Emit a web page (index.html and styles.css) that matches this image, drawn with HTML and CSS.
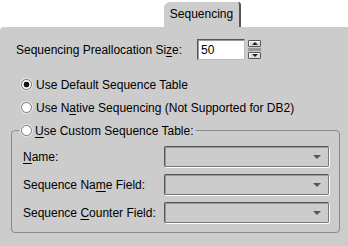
FILE: index.html
```html
<!DOCTYPE html>
<html lang="en">
<head>
    <meta charset="UTF-8">
    <title>Sequencing</title>
    <link rel="stylesheet" href="styles.css">
</head>
<body>
    <div class="tabs">
        <div class="tab">Sequencing</div>
    </div>
    <div class="panel">
        <div class="prealloc">
            <span class="prealloc-label">Sequencing Preallocation Si<u>z</u>e:</span>
            <span class="spin-field">50</span>
            <span class="spin-buttons">
                <span class="spin-btn"><span class="arrow-up"></span></span>
                <span class="spin-bar"></span>
                <span class="spin-btn"><span class="arrow-down"></span></span>
            </span>
        </div>
        <div class="radio-row">
            <span class="radio checked"></span>
            <span>Use Default Sequence Table</span>
        </div>
        <div class="radio-row">
            <span class="radio"></span>
            <span>Use N<u>a</u>tive Sequencing (Not Supported for DB2)</span>
        </div>
        <fieldset class="group">
            <legend class="radio-row legend">
                <span class="radio"></span>
                <span><u>U</u>se Custom Sequence Table:</span>
            </legend>
            <div class="field-grid">
                <span class="field-label"><u>N</u>ame:</span>
                <span class="combo"><span class="arrow-down combo-arrow"></span></span>
                <span class="field-label">Sequence Na<u>m</u>e Field:</span>
                <span class="combo"><span class="arrow-down combo-arrow"></span></span>
                <span class="field-label">Sequence <u>C</u>ounter Field:</span>
                <span class="combo"><span class="arrow-down combo-arrow"></span></span>
            </div>
        </fieldset>
    </div>
</body>
</html>
```
FILE: styles.css
```css
body {
    margin: 0;
    background-color: #fff;
    font-family: "Liberation Sans", Arial, sans-serif;
    font-size: 12px;
    color: #000;
    width: 348px;
    height: 246px;
    overflow: hidden;
}

u {
    text-decoration-thickness: 1px;
    text-underline-offset: 2px;
}

.tabs {
    display: flex;
    height: 27px;
    padding-left: 164px;
    align-items: flex-end;
}

.tab {
    width: 77px;
    height: 24px;
    background-color: #cccccc;
    border-right: 2px solid #555;
    border-top-left-radius: 6px;
    border-top-right-radius: 3px;
    display: flex;
    align-items: center;
    justify-content: center;
    padding-bottom: 1px;
    box-sizing: border-box;
    height: 25px;
}

.panel {
    background-color: #cccccc;
    border-top-left-radius: 4px;
    height: 219px;
    padding: 12px 8px 0 11px;
    box-sizing: border-box;
}

.prealloc {
    display: flex;
    align-items: center;
    height: 21px;
    padding-left: 5px;
}

.prealloc-label {
    width: 181px;
}

.spin-field {
    width: 48px;
    height: 21px;
    box-sizing: border-box;
    background-color: #fff;
    border: 1px solid #555;
    border-right-color: #bbb;
    border-bottom-color: #bbb;
    box-shadow: inset 1px 1px 0 #999;
    padding: 3px 0 0 3px;
}

.spin-buttons {
    display: flex;
    flex-direction: column;
    margin-left: 3px;
    gap: 1px;
}

.spin-btn {
    width: 13px;
    height: 7px;
    box-sizing: border-box;
    background-color: #ddd;
    border: 1px solid #555;
    border-radius: 1px;
    box-shadow: inset 1px 1px 0 #fff;
    display: flex;
    align-items: center;
    justify-content: center;
}

.spin-bar {
    width: 13px;
    height: 3px;
    background-color: #9a9a9a;
}

.arrow-up {
    width: 0;
    height: 0;
    border-left: 3px solid transparent;
    border-right: 3px solid transparent;
    border-bottom: 3px solid #222;
}

.arrow-down {
    width: 0;
    height: 0;
    border-left: 3px solid transparent;
    border-right: 3px solid transparent;
    border-top: 3px solid #222;
}

.radio-row {
    display: flex;
    align-items: center;
    height: 23px;
    padding-left: 10px;
    gap: 4px;
}

.prealloc + .radio-row {
    margin-top: 13px;
}

.radio {
    width: 11px;
    height: 11px;
    box-sizing: border-box;
    border-radius: 50%;
    background-color: #fff;
    border: 1px solid #777;
    box-shadow: 0 0 0 1px #e6e6e6;
    position: relative;
}

.radio.checked {
    background: radial-gradient(circle, #111 0, #111 2.6px, #fff 3.2px);
}

.group {
    margin: 0;
    padding: 4px 10px 9px 7px;
    border: 1px solid #8a8a8a;
    border-radius: 4px;
    min-width: 0;
    height: 114px;
    box-sizing: border-box;
}

.legend {
    padding: 0 2px;
    margin-left: 0;
    gap: 3px;
}

.field-grid {
    display: grid;
    grid-template-columns: 141px 165px;
    grid-auto-rows: 21px;
    row-gap: 7px;
    align-items: center;
    padding-left: 4px;
}

.combo {
    height: 21px;
    box-sizing: border-box;
    border: 1px solid #555;
    border-right-color: #777;
    border-bottom-color: #777;
    border-radius: 2px;
    box-shadow: inset 1px 1px 0 #999, 1px 1px 0 #fff;
    display: flex;
    align-items: center;
    justify-content: flex-end;
    padding-right: 7px;
}

.combo-arrow {
    border-left-width: 4px;
    border-right-width: 4px;
    border-top: 4px solid #555;
}
```
